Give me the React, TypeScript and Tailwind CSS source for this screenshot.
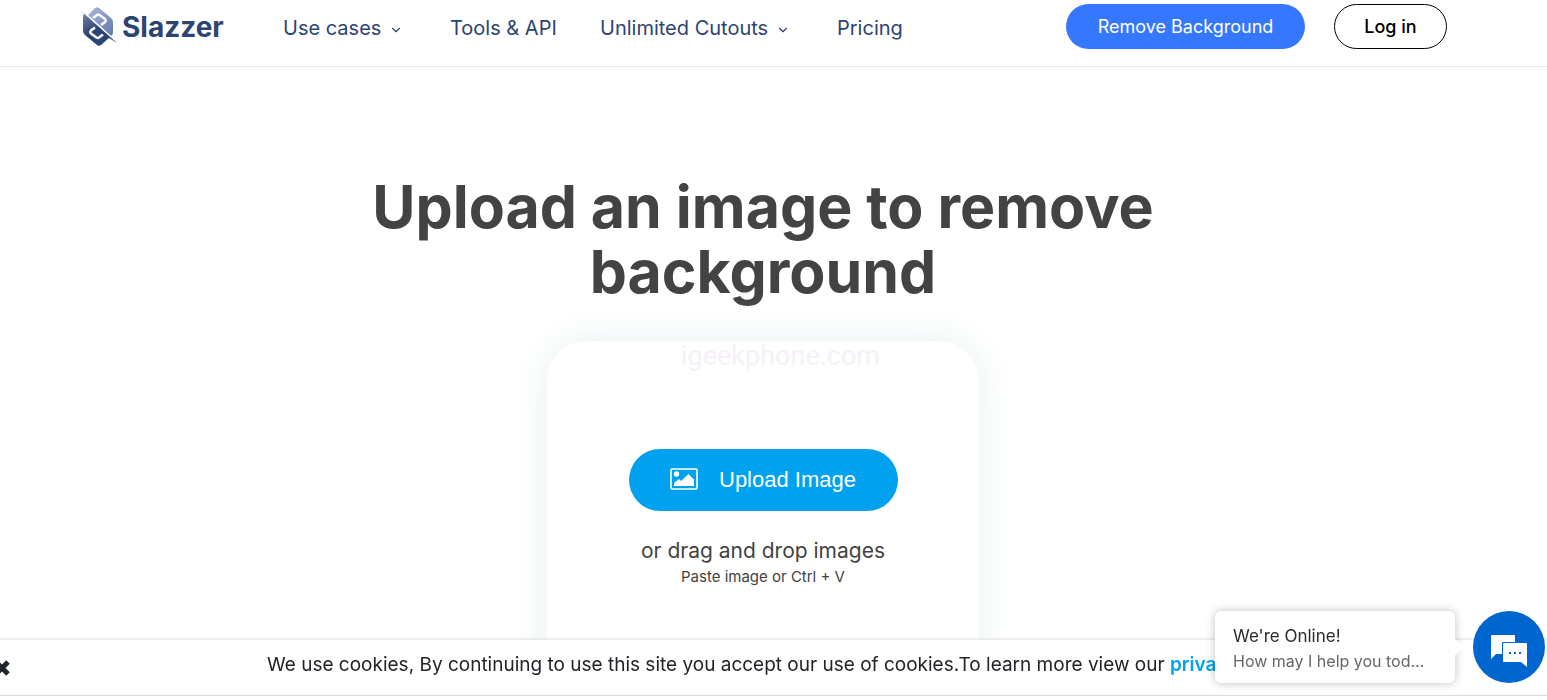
import { ChevronDown } from "lucide-react";

function LogoMark() {
  return (
    <svg viewBox="0 0 38 42" className="h-[42px] w-[38px]" aria-hidden="true">
      <defs>
        <linearGradient id="upper" x1="0" y1="0" x2="1" y2="1">
          <stop offset="0" stopColor="#a9b8da" />
          <stop offset="1" stopColor="#6379b0" />
        </linearGradient>
        <linearGradient id="lower" x1="0" y1="0" x2="0.6" y2="1">
          <stop offset="0" stopColor="#8492b5" />
          <stop offset="0.6" stopColor="#2c4474" />
          <stop offset="1" stopColor="#2c4474" />
        </linearGradient>
      </defs>
      <path d="M8 10 L15 3 Q17 1.500 19 3 L31 13 Q33 15 33 17 V27 Q33 30 31 31 Z" fill="url(#upper)" />
      <path d="M0 5 L37 38 L29 33 L21 40 Q19 41.500 17 40 L5 30 Q3 28 3 26 V13 Q3 10 4 9 Z" fill="url(#lower)" />
      <path d="M13 13 L17 10 Q18 9 19.500 10 L25 14 Q26.500 15.500 25 17 L21 20" fill="none" stroke="#fff" strokeWidth="2.400" />
      <path d="M23 29.500 L19 32.500 Q18 33.500 16.500 32.500 L11 28.500 Q9.500 27 11 25.500 L15 22.500" fill="none" stroke="#fff" strokeWidth="2.400" />
      <path d="M2 5.500 L36 36" stroke="#fff" strokeWidth="1" />
    </svg>
  );
}

function PictureIcon() {
  return (
    <svg viewBox="0 0 28 22" className="h-[22px] w-7" aria-hidden="true">
      <rect x="1" y="1" width="26" height="20" rx="1" fill="none" stroke="currentColor" strokeWidth="1.600" />
      <circle cx="6.500" cy="6" r="2.700" fill="currentColor" />
      <path d="M4 18 V15 L9 11 L11 13 L18.500 6 L24 11.500 V18 Z" fill="currentColor" />
    </svg>
  );
}

function ChatIcon() {
  return (
    <svg viewBox="0 0 36 32" className="h-8 w-9" aria-hidden="true">
      <path d="M1 0 H23 Q24 0 24 1 V7 H12 Q11 7 11 8 V19 H5 L0 24 V1 Q0 0 1 0 Z" fill="#fff" />
      <path d="M13 8 H35 Q36 8 36 9 V32 L30 27 H13 Q12 27 12 26 V9 Q12 8 13 8 Z" fill="#fff" />
      <path d="M18 17 h2 v2 h-2 Z M23 17 h2 v2 h-2 Z M28 17 h2 v2 h-2 Z" fill="#0066cf" />
    </svg>
  );
}

function Header() {
  return (
    <header className="flex h-[67px] shrink-0 items-start border-b border-[#e8e8e8] pr-[100px] pl-20 text-[#2c4474]">
      <a href="#home" className="flex w-[203px] items-start gap-1 pt-[5px]">
        <LogoMark />
        <span className="text-[28px] leading-[44px] font-bold">Slazzer</span>
      </a>
      <nav className="grid grid-cols-[167px_150px_237px_auto] pt-3 text-xl leading-8 whitespace-nowrap">
        <a href="#use-cases" className="flex items-center gap-2">
          Use cases <ChevronDown className="mt-1 size-3.5" />
        </a>
        <a href="#tools">Tools &amp; API</a>
        <a href="#cutouts" className="flex items-center gap-2">
          Unlimited Cutouts <ChevronDown className="mt-1 size-3.5" />
        </a>
        <a href="#pricing">Pricing</a>
      </nav>
      <div className="ml-auto flex gap-[29px] pt-1 text-lg whitespace-nowrap">
        <button className="h-[45px] w-[239px] rounded-full bg-[#3577ff] text-white">Remove Background</button>
        <button className="h-[45px] w-[113px] rounded-full border border-black font-medium text-black">Log in</button>
      </div>
    </header>
  );
}

function UploadCard() {
  return (
    <section className="relative mt-[35px] flex h-[400px] w-[432px] shrink-0 flex-col items-center rounded-[40px] bg-white pt-[108px] text-[#434343] shadow-[0_0_40px_#e6f0f2]">
      <p className="absolute top-0 left-[134px] font-['Roboto'] text-[27px] leading-[30px] text-[#f6f0f8]">igeekphone.com</p>
      <button className="flex h-[62px] w-[269px] items-center justify-center gap-[21px] rounded-full bg-[#00a2f0] pb-0.5 font-['Liberation_Sans',sans-serif] text-[22px] text-white">
        <PictureIcon />
        Upload Image
      </button>
      <p className="mt-6 text-[21px] leading-8">or drag and drop images</p>
      <p className="text-[15px] leading-5">Paste image or Ctrl + V</p>
    </section>
  );
}

function CookieBar() {
  return (
    <aside className="fixed inset-x-0 bottom-0 bg-white pb-1 text-[#212529] shadow-[0_-1px_3px_#e0e0e0]">
      <div className="flex h-14 items-center border-b border-[#d8d8d8] pr-[332px]">
        <button aria-label="Close" className="-ml-2 shrink-0">
          <svg viewBox="0 0 20 20" className="size-5" aria-hidden="true">
            <path d="M4 4 L16 16 M16 4 L4 16" stroke="currentColor" strokeWidth="5" />
          </svg>
        </button>
        <p className="ml-[255px] min-w-0 overflow-hidden pb-1 text-[19px] whitespace-nowrap">
          We use cookies, By continuing to use this site you accept our use of cookies.To learn more view our{" "}
          <a href="#privacy" className="font-semibold text-[#00a2f0]">privacy</a>
        </p>
      </div>
    </aside>
  );
}

function ChatWidget() {
  return (
    <div className="fixed right-0.5 bottom-[17px] flex items-center gap-[18px]">
      <div className="relative h-[72px] w-60 rounded-md bg-white px-[18px] pt-3 shadow-[0_0_10px_#00000040]">
        <span className="absolute top-[30px] -right-1.5 size-3 rotate-45 bg-white" />
        <p className="text-[17px] leading-[26px] text-[#2b2b2b]">We're Online!</p>
        <p className="text-base leading-6 whitespace-nowrap text-[#666]">How may I help you tod...</p>
      </div>
      <button aria-label="Open chat" className="flex size-[72px] items-center justify-center rounded-full bg-[#0066cf] pt-2">
        <ChatIcon />
      </button>
    </div>
  );
}

export default function App() {
  return (
    <div className="flex h-screen flex-col overflow-hidden bg-white font-['Inter',sans-serif]">
      <Header />
      <main className="flex flex-col items-center pt-[107px] pr-[21px]">
        <h1 className="mb-0.5 max-w-[860px] text-center text-[59px] leading-[65px] font-bold text-[#434343]">
          Upload an image to remove background
        </h1>
        <UploadCard />
      </main>
      <CookieBar />
      <ChatWidget />
    </div>
  );
}
